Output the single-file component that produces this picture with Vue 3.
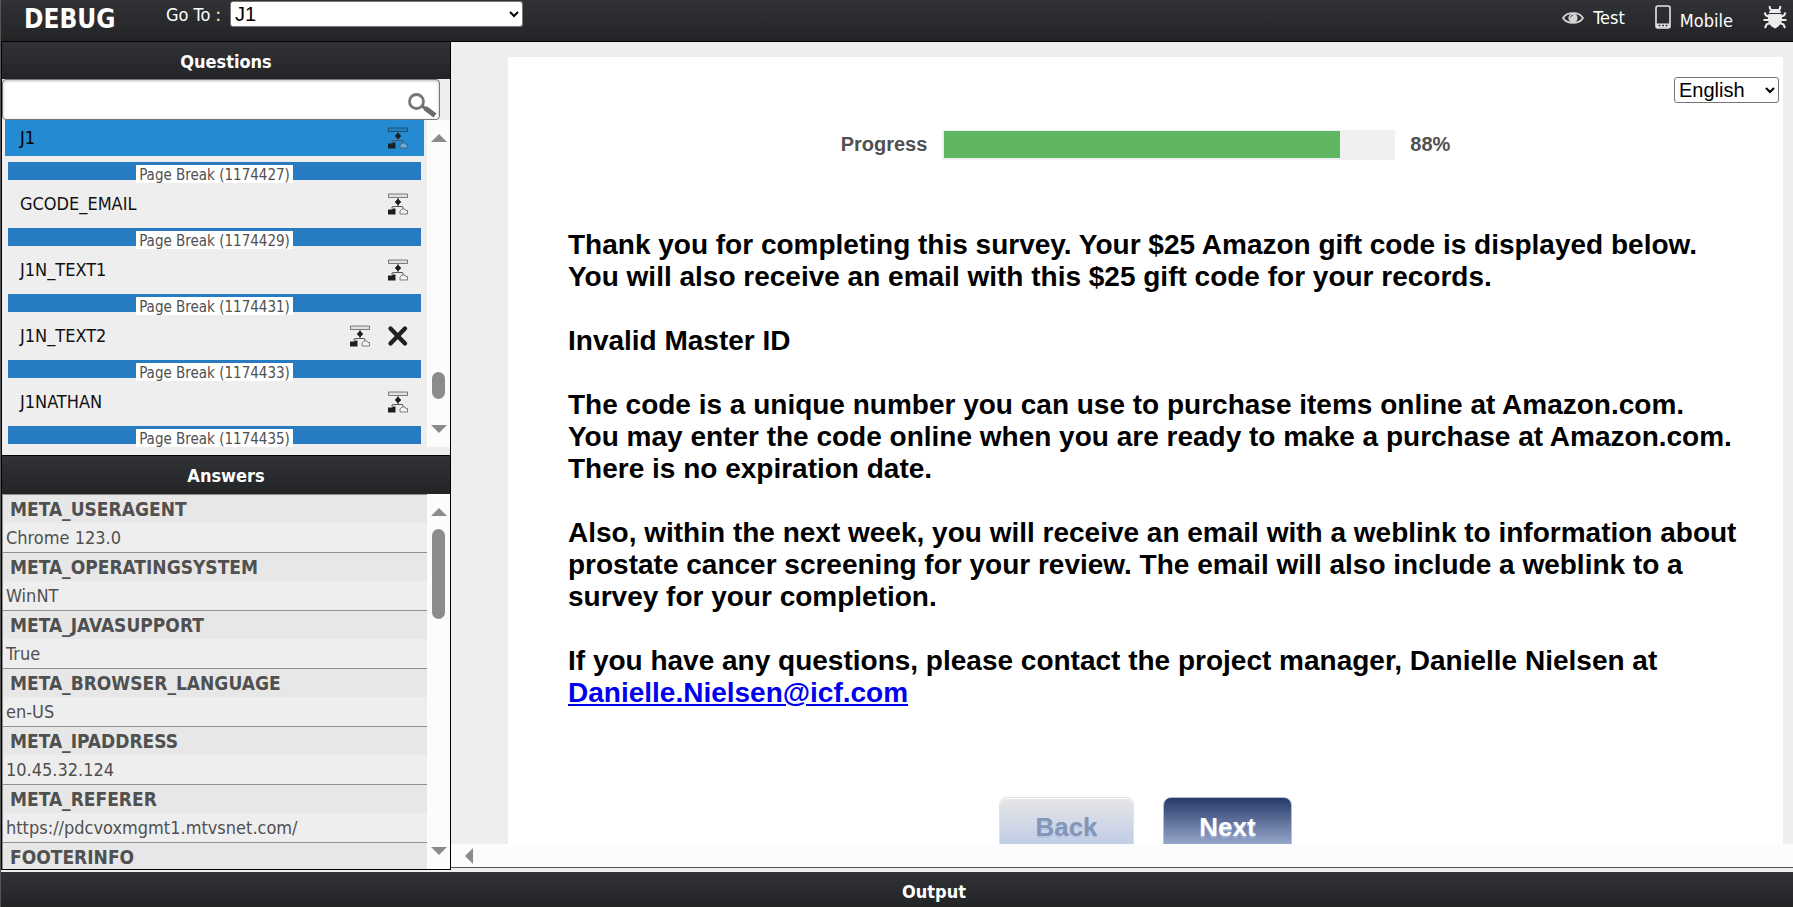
<template>
  <div class="debugger">
    <header class="topbar">
      <h1 class="brand">DEBUG</h1>
      <div class="goto">
        <label for="goto">Go To :</label>
        <select id="goto" v-model="current" class="goto-select">
          <option v-for="q in questions" :key="q.name">{{ q.name }}</option>
        </select>
      </div>
      <nav class="tools">
        <a href="#" class="tool tool-test">
          <svg width="22" height="16" viewBox="0 0 22 16">
            <path d="M1 8C5 1.500 17 1.500 21 8C17 14.500 5 14.500 1 8Z" fill="none" stroke="#d4d4d4" stroke-width="1.800" />
            <circle cx="11" cy="8" r="4.600" fill="#d4d4d4" />
            <path d="M8.500 7.500A2.500 2.500 0 0 1 11 5.300" fill="none" stroke="#555" />
          </svg>
          <span>Test</span>
        </a>
        <a href="#" class="tool tool-mobile">
          <svg width="16" height="24" viewBox="0 0 16 24">
            <rect x="1" y="1" width="14" height="22" rx="2" fill="none" stroke="#e6e6e6" stroke-width="1.600" />
            <path d="M1.500 18.500H14.500V22.500H1.500Z" fill="#e6e6e6" />
            <path d="M3.500 20.500h2M7 20.500h2M10.500 20.500h2" stroke="#333" stroke-width="1.300" />
          </svg>
          <span>Mobile</span>
        </a>
        <a href="#" class="tool" aria-label="Report a bug">
          <svg width="24" height="24" viewBox="0 0 24 24" fill="none" stroke="#ececec">
            <path d="M7 1C6 4 8 5 10 5M17 1C18 4 16 5 14 5" stroke-width="2" />
            <path d="M6 8C6 2.500 18 2.500 18 8Z" fill="#ececec" stroke="none" />
            <path d="M5.500 9H18.500C20 14 19 20.500 12 23.500C5 20.500 4 14 5.500 9Z" fill="#ececec" stroke="none" />
            <path d="M7 12L3 10.500L1.500 7.500M6 15H0.500M7 18L3.500 19.500L2 23M17 12L21 10.500L22.500 7.500M18 15H23.500M17 18L20.500 19.500L22 23" stroke-width="2" />
          </svg>
        </a>
      </nav>
    </header>

    <div class="workspace">
      <aside class="sidebar">
        <section class="questions">
          <h2 class="bar">Questions</h2>
          <form class="search" @submit.prevent>
            <input v-model="search" type="text" aria-label="Search questions" class="search-input">
            <button type="submit" class="search-button" aria-label="Search">
              <svg width="29" height="25" viewBox="0 0 29 25" fill="none" stroke="#6b6b6b">
                <circle cx="8.500" cy="8.500" r="7" stroke="#777" stroke-width="2.800" />
                <path d="M14 13L18 16" stroke-width="3" />
                <path d="M17 15L27 22.500" stroke-width="5" />
              </svg>
            </button>
          </form>
          <div class="scroller">
            <ul class="question-list">
              <li v-for="q in filtered" :key="q.name">
                <div class="question" :class="{ active: q.name === current }">
                  <span class="question-name">{{ q.name }}</span>
                  <button type="button" class="icon-button" aria-label="Show logic">
                    <svg width="22" height="22" viewBox="0 0 22 22">
                      <path d="M1.500 1H20.500V4.500H1.500Z" fill="#000" fill-opacity="0.050" stroke="#222" stroke-opacity="0.550" />
                      <path d="M11 5V13M5 15.500V14.500Q5 13.500 7 13.500H15Q16 13.500 16 15.500" fill="none" stroke="#555" stroke-width="1.200" />
                      <path d="M11 6L14 9L11 12L8 9Z" fill="#1c1f22" stroke="#1c1f22" stroke-width="0.600" />
                      <path d="M1 16.500H5L6 15.500H8.500V21.500H1Z" fill="#1c1f22" />
                      <path d="M13 21V18L15 16H18L19 17.500H20.500V21Z" fill="#fff" fill-opacity="0.300" stroke="#444" stroke-opacity="0.650" />
                    </svg>
                  </button>
                  <button v-if="q.removable" type="button" class="icon-button" aria-label="Remove">
                    <svg width="22" height="22" viewBox="0 0 22 22">
                      <path d="M3.500 3.500L18 18.500M18 3.500L3.500 18.500" stroke="#1f2225" stroke-width="4.400" stroke-linecap="round" />
                    </svg>
                  </button>
                </div>
                <div class="page-break"><span>Page Break ({{ q.pageBreak }})</span></div>
              </li>
            </ul>
            <div class="scrollbar questions-scroll">
              <i class="arrow up" />
              <i class="thumb" />
              <i class="arrow down" />
            </div>
          </div>
        </section>

        <section class="answers">
          <h2 class="bar">Answers</h2>
          <div class="scroller">
            <dl class="answer-list">
              <div v-for="a in answers" :key="a.key" class="answer">
                <dt>{{ a.key }}</dt>
                <dd>{{ a.value }}</dd>
              </div>
            </dl>
            <div class="scrollbar answers-scroll">
              <i class="arrow up" />
              <i class="thumb" />
              <i class="arrow down" />
            </div>
          </div>
        </section>
      </aside>

      <main class="preview">
        <div class="survey">
          <select v-model="language" class="language" aria-label="Language">
            <option>English</option>
          </select>
          <div class="progress">
            <span>Progress</span>
            <div class="track">
              <div class="fill" :style="{ width: progress + '%' }" />
            </div>
            <span>{{ progress }}%</span>
          </div>
          <div class="message">
            <p v-for="text in paragraphs" :key="text">{{ text }}</p>
            <p>
              If you have any questions, please contact the project manager, Danielle Nielsen at<br>
              <a href="mailto:Danielle.Nielsen@icf.com">Danielle.Nielsen@icf.com</a>
            </p>
          </div>
          <div class="actions">
            <button type="button" class="nav-button back">Back</button>
            <button type="button" class="nav-button next">Next</button>
          </div>
        </div>
        <div class="hscroll"><i class="arrow left" /></div>
      </main>
    </div>

    <footer class="output">
      <h2>Output</h2>
    </footer>
  </div>
</template>

<script setup>
import { computed, ref } from 'vue'

const current = ref('J1')
const search = ref('')
const language = ref('English')
const progress = ref(88)

const questions = [
  { name: 'J1', pageBreak: 1174427 },
  { name: 'GCODE_EMAIL', pageBreak: 1174429 },
  { name: 'J1N_TEXT1', pageBreak: 1174431 },
  { name: 'J1N_TEXT2', pageBreak: 1174433, removable: true },
  { name: 'J1NATHAN', pageBreak: 1174435 },
]

const filtered = computed(() => questions.filter(q => q.name.includes(search.value.toUpperCase())))

const answers = [
  { key: 'META_USERAGENT', value: 'Chrome 123.0' },
  { key: 'META_OPERATINGSYSTEM', value: 'WinNT' },
  { key: 'META_JAVASUPPORT', value: 'True' },
  { key: 'META_BROWSER_LANGUAGE', value: 'en-US' },
  { key: 'META_IPADDRESS', value: '10.45.32.124' },
  { key: 'META_REFERER', value: 'https://pdcvoxmgmt1.mtvsnet.com/' },
  { key: 'FOOTERINFO', value: '' },
]

const paragraphs = [
  'Thank you for completing this survey. Your $25 Amazon gift code is displayed below.\nYou will also receive an email with this $25 gift code for your records.',
  'Invalid Master ID',
  'The code is a unique number you can use to purchase items online at Amazon.com.\nYou may enter the code online when you are ready to make a purchase at Amazon.com.\nThere is no expiration date.',
  'Also, within the next week, you will receive an email with a weblink to information about\nprostate cancer screening for your review. The email will also include a weblink to a\nsurvey for your completion.',
]
</script>

<style>
body {
  margin: 0;
  background: #eee;
}
</style>

<style scoped>
.debugger {
  box-sizing: border-box;
  display: flex;
  flex-direction: column;
  height: 100vh;
  overflow: hidden;
  border-left: 1px solid #555;
  background: #eee;
  color: #505050;
  font-family: "DejaVu Sans Condensed", "DejaVu Sans", sans-serif;
  font-stretch: condensed;
  font-size: 18px;
}
h1, h2, p, ul, dl, dd { margin: 0; padding: 0; }
button { padding: 0; border: 0; background: none; cursor: pointer; }
svg { display: block; }

.topbar {
  display: flex;
  flex: none;
  height: 41px;
  border-bottom: 1px solid #000;
  background: linear-gradient(#303236, #232426);
  color: #fff;
}
.brand {
  width: 142px;
  padding-left: 23px;
  font-size: 26px;
  line-height: 38px;
}
.goto {
  display: flex;
  align-items: flex-start;
  gap: 9px;
  padding-top: 1px;
  line-height: 28px;
}
select {
  box-sizing: border-box;
  height: 26px;
  padding: 0;
  border: 1px solid #767676;
  border-radius: 3px;
  background-color: #fff;
  color: #000;
  font-family: "Liberation Sans", Arial, sans-serif;
  font-size: 20px;
}
.goto-select { width: 293px; }
.tools {
  display: flex;
  gap: 30px;
  align-items: flex-start;
  margin-left: auto;
  padding: 5px 6px 0 0;
}
.tool {
  display: flex;
  gap: 9px;
  color: #fff;
  line-height: 26px;
  text-decoration: none;
}
.tool-test { align-items: center; }
.tool-mobile span { padding-top: 3px; }

.workspace { display: flex; flex: 1; min-height: 0; }
.sidebar {
  display: flex;
  flex: none;
  flex-direction: column;
  width: 448px;
  margin-bottom: 2px;
  border: solid #000;
  border-width: 0 1px 1px;
}
.bar {
  height: 37px;
  background: linear-gradient(#303236, #232426);
  color: #fff;
  font-size: 18px;
  line-height: 39px;
  text-align: center;
}
.questions { display: flex; flex: none; flex-direction: column; padding-bottom: 8px; }
.search { display: flex; position: relative; width: 438px; }
.search-input {
  box-sizing: border-box;
  width: 100%;
  height: 41px;
  padding: 0 40px 0 8px;
  border: 1px solid #767676;
  border-radius: 4px;
  box-shadow: inset 0 1px 3px #bbb;
  font: inherit;
}
.search-button { position: absolute; right: 3px; bottom: 2px; }

.scroller { display: flex; min-height: 0; }
.question-list { flex: 1; padding: 0 3px; list-style: none; }
.question-list li { height: 66px; }
.question-list li:last-child { height: 61px; }
.questions .scroller { height: 327px; }
.question {
  display: flex;
  gap: 16px;
  align-items: center;
  height: 36px;
  padding: 0 15px;
  color: #111;
  line-height: 36px;
}
.question.active { background: #248ad1; color: #000; }
.question-name { flex: 1; }
.page-break {
  height: 18px;
  margin: 6px 3px;
  background: #277bc0;
  text-align: center;
}
.page-break span {
  display: block;
  position: relative;
  top: 3px;
  width: fit-content;
  height: 18px;
  margin: 0 auto;
  padding: 0 3px;
  background: #fff;
  font-size: 15px;
  line-height: 20px;
}

.scrollbar {
  display: flex;
  flex: none;
  flex-direction: column;
  align-items: center;
  box-sizing: border-box;
  width: 23px;
  padding: 14px 0;
  background: #fcfcfc;
}
.arrow { width: 0; height: 0; border: 0 solid transparent; }
.up { border-width: 0 8px 8px; border-bottom-color: #8b8b8b; }
.down { border-width: 8px 8px 0; border-top-color: #8b8b8b; margin-top: auto; }
.left { border-width: 8px 8px 8px 0; border-right-color: #8b8b8b; }
.thumb { width: 13px; border-radius: 7px; background: #8b8b8b; }
.questions-scroll .thumb { height: 27px; margin-top: auto; }
.questions-scroll .down { margin-top: 26px; }
.answers-scroll .thumb { height: 90px; margin-top: 13px; }

.answers {
  display: flex;
  flex: 1;
  flex-direction: column;
  min-height: 0;
  border-top: 1px solid #000;
}
.answers .bar { flex: none; height: 38px; }
.answers .scroller { flex: 1; }
.answer-list { flex: 1; overflow: hidden; }
.answer { border: solid #8f8f8f; border-width: 1px 0 0 1px; }
.answer dt {
  height: 28px;
  padding-left: 7px;
  background: #e7e7e7;
  font-size: 19px;
  font-weight: bold;
  line-height: 28px;
}
.answer dd { height: 29px; padding-left: 3px; line-height: 29px; }

.preview {
  display: flex;
  flex: 1;
  flex-direction: column;
  min-width: 0;
  margin-bottom: 4px;
  border-bottom: 1px solid #555;
}
.survey {
  display: flex;
  flex: 1;
  flex-direction: column;
  min-height: 0;
  margin: 15px 10px 0 57px;
  overflow: hidden;
  background: #fff;
  font-family: "Liberation Sans", Arial, sans-serif;
}
.language { flex: none; align-self: flex-end; width: 105px; margin: 20px 4px 27px 0; }
.progress {
  display: flex;
  flex: none;
  gap: 15px;
  align-items: center;
  justify-content: center;
  font-size: 20px;
  font-weight: bold;
  line-height: 28px;
}
.progress span { height: 30px; }
.track {
  box-sizing: border-box;
  width: 453px;
  height: 30px;
  padding: 1px 1px 2px 2px;
  background: #f0f0f0;
}
.fill { height: 27px; background: #5eb562; }
.message {
  flex: none;
  padding: 69px 40px 0 60px;
  color: #000;
  font-size: 28px;
  font-weight: bold;
  line-height: 32px;
}
.message p { margin-bottom: 32px; white-space: pre-line; }
.message a { color: #00e; }
.actions {
  display: flex;
  flex: none;
  gap: 29px;
  justify-content: center;
  padding-top: 56px;
}
.nav-button {
  height: 60px;
  border: 1px solid #b4c0d8;
  border-radius: 8px;
  font-family: "Liberation Sans", Arial, sans-serif;
  font-size: 26px;
  font-weight: bold;
}
.back {
  width: 135px;
  border-color: #e0e2e8;
  background: linear-gradient(#e6e6e6, #c2cee6 45px);
  box-shadow: inset 0 1px #fff;
  color: #8496b6;
  text-shadow: 0 2px 1px #b4c6e6;
}
.next {
  width: 129px;
  background: linear-gradient(#263a68, #94a4c8 45px);
  color: #fff;
  text-shadow: 0 2px 1px #9cb0d8;
}
.hscroll {
  display: flex;
  flex: none;
  align-items: center;
  height: 23px;
  padding-left: 14px;
  background: #fcfcfc;
}

.output {
  flex: none;
  height: 35px;
  background: linear-gradient(#303236, #232426);
  color: #fff;
  text-align: center;
}
.output h2 { padding-left: 74px; font-size: 18px; line-height: 39px; }
</style>
